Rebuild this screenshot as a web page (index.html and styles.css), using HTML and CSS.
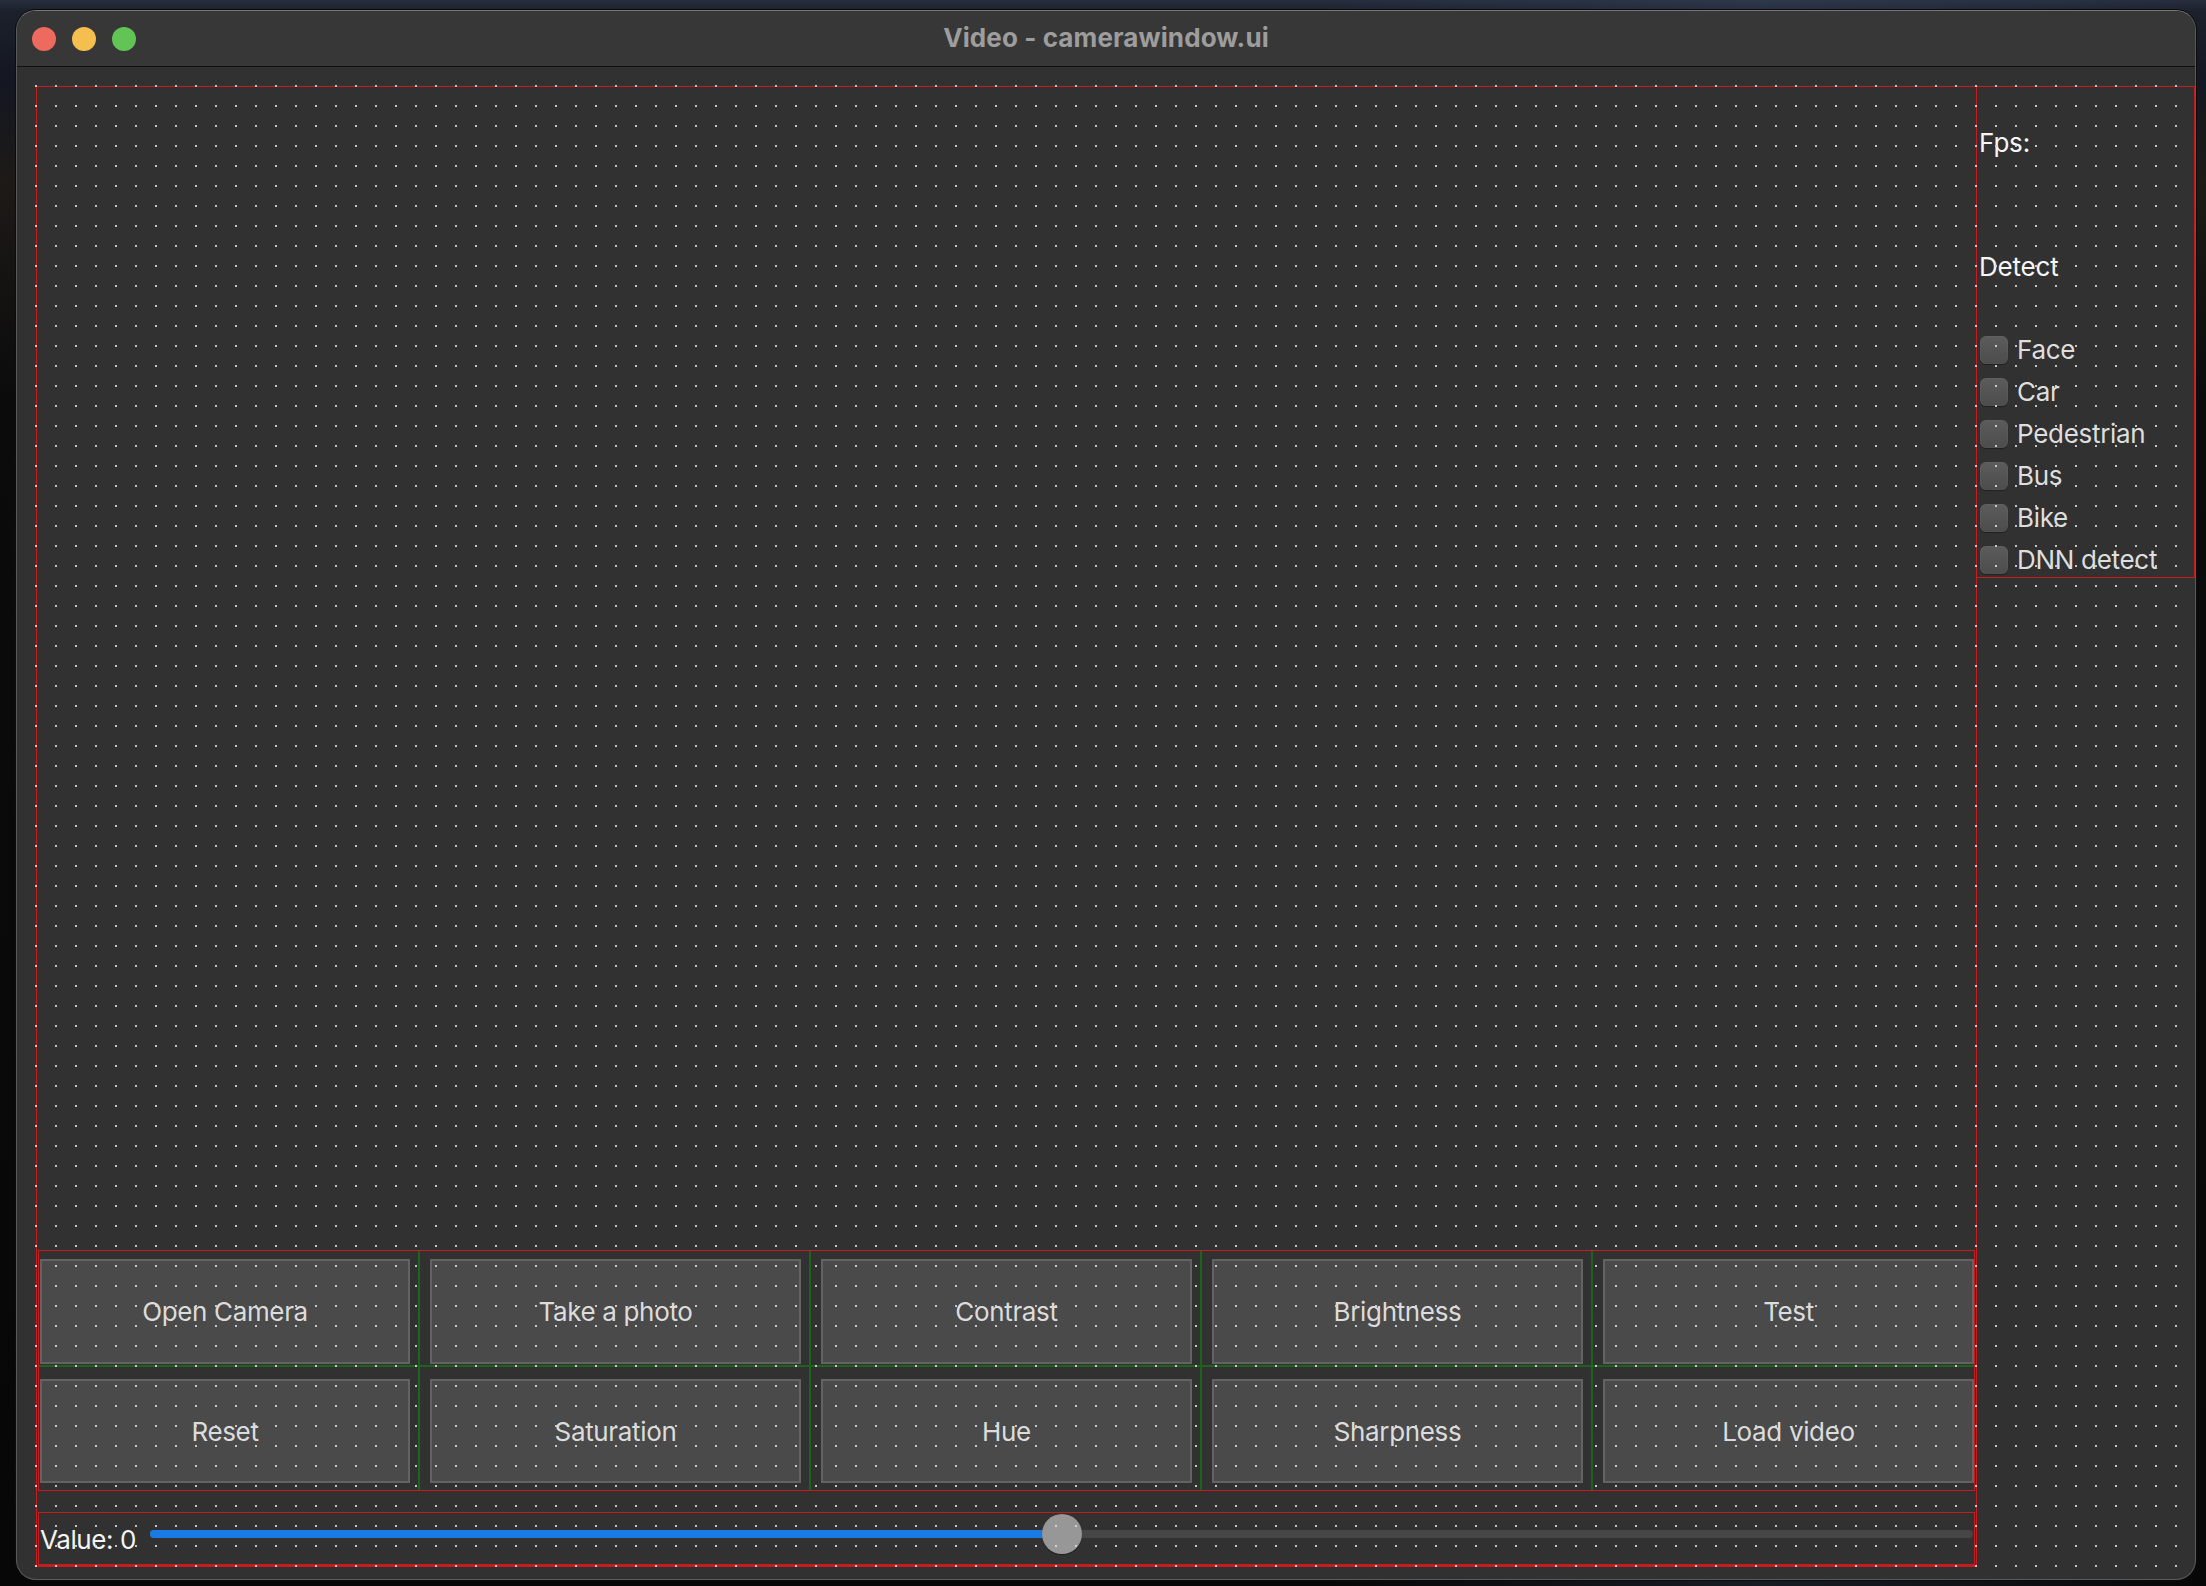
FILE: index.html
```html
<!DOCTYPE html>
<html lang="en">
<head>
<meta charset="utf-8">
<title>Video - camerawindow.ui</title>
<link rel="stylesheet" href="styles.css">
</head>
<body>
<div class="window">
  <div class="titlebar">
    <div class="lights">
      <span class="light light-red"></span>
      <span class="light light-yellow"></span>
      <span class="light light-green"></span>
    </div>
    <div class="title">Video - camerawindow.ui</div>
    <div class="titlebar-spacer"></div>
  </div>
  <div class="content">
    <div class="main-frame">
      <div class="video-area"></div>
      <div class="buttons-frame">
        <div class="cell"><div class="btn">Open Camera</div></div>
        <div class="cell"><div class="btn">Take a photo</div></div>
        <div class="cell"><div class="btn">Contrast</div></div>
        <div class="cell"><div class="btn">Brightness</div></div>
        <div class="cell"><div class="btn">Test</div></div>
        <div class="cell"><div class="btn">Reset</div></div>
        <div class="cell"><div class="btn">Saturation</div></div>
        <div class="cell"><div class="btn">Hue</div></div>
        <div class="cell"><div class="btn">Sharpness</div></div>
        <div class="cell"><div class="btn">Load video</div></div>
      </div>
      <div class="slider-frame">
        <span class="value-label">Value: 0</span>
        <div class="slider">
          <div class="slider-fill" style="width:50%"></div>
          <div class="slider-handle" style="left:calc(50% - 20px)"></div>
        </div>
      </div>
    </div>
    <div class="side-panel">
      <div class="side-label">Fps:</div>
      <div class="side-label detect-label">Detect</div>
      <div class="checks">
        <div class="check"><span class="box"></span><span class="check-text">Face</span></div>
        <div class="check"><span class="box"></span><span class="check-text">Car</span></div>
        <div class="check"><span class="box"></span><span class="check-text">Pedestrian</span></div>
        <div class="check"><span class="box"></span><span class="check-text">Bus</span></div>
        <div class="check"><span class="box"></span><span class="check-text">Bike</span></div>
        <div class="check"><span class="box"></span><span class="check-text">DNN detect</span></div>
      </div>
    </div>
    <div class="dots"></div>
  </div>
</div>
</body>
</html>
```

FILE: styles.css
```css
* { box-sizing: border-box; }

html, body {
  margin: 0;
  padding: 0;
  width: 2206px;
  height: 1586px;
  overflow: hidden;
}

body {
  background:
    linear-gradient(90deg, rgba(0,0,0,0) 0%, rgba(0,0,0,0) 60%, rgba(70,90,120,0.25) 80%, rgba(0,0,0,0) 100%),
    linear-gradient(180deg, #262d3d 0px, #1b202b 12px, #141722 80px, #1d1a17 180px, #0b0b0c 400px, #070707 100%);
  font-family: "Inter", "Noto Sans", sans-serif;
  padding: 10px 0 0 16px;
}

.window {
  width: 2180px;
  height: 1570px;
  border: 1px solid #5a5a5a;
  border-top-color: #767676;
  border-radius: 20px;
  overflow: hidden;
  background: #313131;
  box-shadow: 0 0 0 1px #0c0c0c;
  display: flex;
  flex-direction: column;
}

.titlebar {
  height: 56px;
  flex: 0 0 56px;
  background: #373737;
  border-bottom: 1px solid #0e0e0e;
  display: grid;
  grid-template-columns: 1fr auto 1fr;
  align-items: center;
}

.lights {
  display: flex;
  gap: 16px;
  padding-left: 15px;
}

.light {
  width: 24px;
  height: 24px;
  border-radius: 50%;
  display: block;
}
.light-red { background: #ee6a5f; }
.light-yellow { background: #f5bf4f; }
.light-green { background: #61c454; }

.title {
  font-weight: 700;
  font-size: 26px;
  color: #9d9d9d;
  margin-bottom: 3px;
  letter-spacing: 0.1px;
}

.content {
  position: relative;
  flex: 1;
  display: flex;
  align-items: flex-start;
  padding: 19px 0 0 19px;
}

.main-frame {
  width: 1941px;
  height: 1481px;
  border: 1px solid #c41d1f;
  display: flex;
  flex-direction: column;
  flex: 0 0 1941px;
}

.video-area {
  flex: 0 0 1163px;
}

.buttons-frame {
  margin: 0 1px;
  height: 241px;
  border: 1px solid #c41d1f;
  display: grid;
  grid-template-columns: 381px 391px 391px 391px 381px;
  grid-template-rows: 116px 123px;
}

.cell {
  padding: 12px 8px 7px 10px;
  border-right: 2px solid #1c631c;
  display: flex;
}
.cell:nth-child(5n+1) { padding-left: 1px; }
.cell:nth-child(5n) { padding-right: 0; border-right: none; }
.cell:nth-child(-n+5) {
  padding-top: 8px;
  padding-bottom: 1px;
  border-bottom: 2px solid #1c631c;
}

.btn {
  flex: 1;
  background: #4a4a4a;
  border: 2px solid #636363;
  display: flex;
  align-items: center;
  justify-content: center;
  color: #dcdcdc;
  font-size: 26px;
  letter-spacing: -0.35px;
}

.slider-frame {
  margin: 21px 1px 0 1px;
  height: 54px;
  border: 1px solid #c41d1f;
  border-bottom-width: 2px;
  display: flex;
  padding: 0 1px;
}

.value-label {
  flex: 0 0 110px;
  align-self: center;
  color: #f4f4f4;
  font-size: 26px;
  line-height: 30px;
  letter-spacing: -0.4px;
  margin-top: 2px;
}

.slider {
  position: relative;
  flex: 1;
  height: 8px;
  margin-top: 17px;
  border-radius: 4px;
  background: #464646;
}

.slider-fill {
  position: absolute;
  left: 0;
  top: 0;
  bottom: 0;
  border-radius: 4px;
  background: #1b7be6;
}

.slider-handle {
  position: absolute;
  top: -16px;
  width: 40px;
  height: 40px;
  border-radius: 50%;
  background: #979797;
  box-shadow: 0 1px 1px rgba(0,0,0,0.35);
}

.side-panel {
  margin-left: -1px;
  width: 219px;
  flex: 0 0 219px;
  border: 1px solid #c41d1f;
  padding: 41px 0 2px 2px;
  display: flex;
  flex-direction: column;
}

.side-label {
  color: #f6f6f6;
  font-size: 26px;
  line-height: 30px;
  letter-spacing: -0.2px;
}

.detect-label {
  margin-top: 94px;
}

.checks {
  margin-top: 53px;
  display: flex;
  flex-direction: column;
  gap: 12px;
}

.check {
  height: 30px;
  display: flex;
  align-items: center;
}

.box {
  width: 28px;
  height: 28px;
  margin-left: 1px;
  margin-right: 9px;
  border-radius: 6px;
  background: linear-gradient(180deg, #5c5c5c 0%, #4c4c4c 100%);
  box-shadow: 0 1px 1px rgba(0,0,0,0.35), inset 0 0 0 1px rgba(255,255,255,0.03);
  flex: 0 0 28px;
}

.check-text {
  color: #dedede;
  font-size: 26px;
  line-height: 30px;
  letter-spacing: -0.3px;
}

.dots {
  position: absolute;
  inset: 0;
  pointer-events: none;
  background-image: linear-gradient(90deg, rgba(214,214,214,0.9) 2px, transparent 2px);
  background-size: 20px 20px;
  background-position: 18px 18px;
  -webkit-mask-image: linear-gradient(180deg, #000 2px, transparent 2px);
  -webkit-mask-size: 20px 20px;
  -webkit-mask-position: 18px 18px;
  mask-image: linear-gradient(180deg, #000 2px, transparent 2px);
  mask-size: 20px 20px;
  mask-position: 18px 18px;
}
```
